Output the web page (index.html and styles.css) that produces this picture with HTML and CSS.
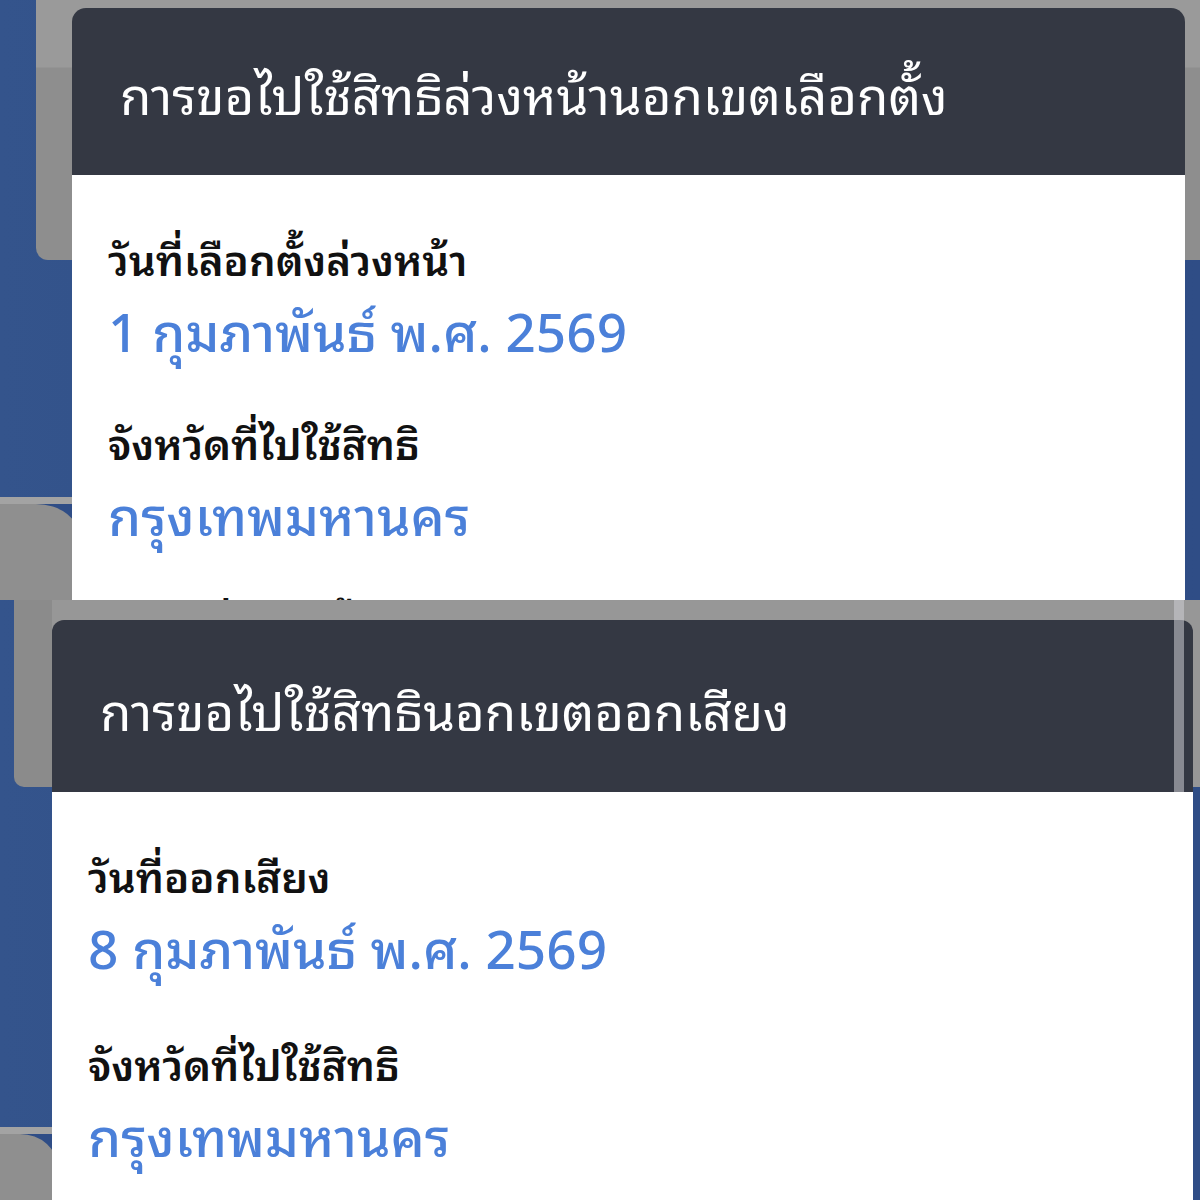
FILE: index.html
```html
<!doctype html>
<html lang="th">
  <head>
    <meta charset="UTF-8" />
    <meta content="width=device-width, initial-scale=1.0" name="viewport" />
    <title>การขอไปใช้สิทธิ</title>
    <link rel="stylesheet" href="styles.css">
  </head>
  <body>
    <div class="shot shot1">
      <div class="back-card"></div>
      <div class="back-corner"></div>
      <div class="sheet">
        <div class="sheet-head">การขอไปใช้สิทธิล่วงหน้านอกเขตเลือกตั้ง</div>
        <div class="sheet-body">
          <div class="label">วันที่เลือกตั้งล่วงหน้า</div>
          <div class="value">1 กุมภาพันธ์ พ.ศ. 2569</div>
          <div class="label">จังหวัดที่ไปใช้สิทธิ</div>
          <div class="value">กรุงเทพมหานคร</div>
          <div class="label">สถานที่เลือกตั้ง</div>
        </div>
      </div>
    </div>
    <div class="shot shot2">
      <div class="back-card"></div>
      <div class="back-corner"></div>
      <div class="sheet">
        <div class="sheet-head">การขอไปใช้สิทธินอกเขตออกเสียง</div>
        <div class="sheet-body">
          <div class="label">วันที่ออกเสียง</div>
          <div class="value">8 กุมภาพันธ์ พ.ศ. 2569</div>
          <div class="label">จังหวัดที่ไปใช้สิทธิ</div>
          <div class="value">กรุงเทพมหานคร</div>
        </div>
      </div>
      <div class="scroll-strip"></div>
    </div>
  </body>
</html>
```

FILE: styles.css
```css
* {
  box-sizing: border-box;
  padding: 0;
  margin: 0;
}

body {
  width: 1200px;
  font-family: "Noto Sans Thai Looped", "Noto Looped Thai", Loma, Garuda, "Noto Sans Thai", "Noto Sans", sans-serif;
  background: #2f4d86;
}

.shot {
  position: relative;
  height: 600px;
  overflow: hidden;
  background: linear-gradient(90deg, #34548c 0%, #2c4a82 60%, #2f4d86 100%);
}

/* grey card sitting behind the sheet */
.back-card {
  position: absolute;
  top: -20px;
  right: 0;
  background: linear-gradient(#9a9a9a 0, #9a9a9a 87px, #8e8e8e 88px);
}

.shot1 .back-card {
  left: 36px;
  height: 280px;
  border-bottom-left-radius: 12px;
}

.shot2 .back-card {
  left: 14px;
  height: 207px;
  border-bottom-left-radius: 10px;
  background: linear-gradient(90deg, #8b8b8b 0, #8b8b8b 38px, #979797 38px);
}

/* rounded grey shape peeking in at the lower left */
.back-corner {
  position: absolute;
  left: 0;
  width: 90px;
  height: 140px;
  border-top: 7px solid #a3a3a3;
  background: #2f4d86;
}

.back-corner::before {
  content: "";
  display: block;
  height: 100%;
  background: #8f8f8f;
}

.shot1 .back-corner {
  top: 497px;
}

.shot1 .back-corner::before {
  width: 80px;
  border-top-right-radius: 44px 34px;
}

.shot2 .back-corner {
  top: 527px;
}

.shot2 .back-corner::before {
  width: 58px;
  border-top-right-radius: 38px 34px;
}

.sheet {
  position: relative;
  display: flex;
  flex-direction: column;
  height: 100%;
}

.shot1 .sheet {
  margin-left: 72px;
  width: 1113px;
  padding-top: 8px;
}

.shot2 .sheet {
  margin-left: 52px;
  width: 1141px;
  padding-top: 20px;
}

.sheet-head {
  flex-shrink: 0;
  display: flex;
  align-items: center;
  background: #343843;
  color: #fff;
  font-size: 51px;
  border-radius: 14px 14px 0 0;
}

.shot1 .sheet-head {
  height: 167px;
  padding: 0 0 0 48px;
}

.shot2 .sheet-head {
  height: 172px;
  padding: 4px 0 0 48px;
  border-radius: 12px 12px 0 0;
}

.sheet-body {
  flex: 1;
  background: #fff;
  padding: 50px 36px 0;
}

.label {
  color: #111;
  font-size: 42px;
  font-weight: 600;
  line-height: 64px;
}

.value {
  color: #4b80d9;
  font-size: 53px;
  font-weight: 500;
  line-height: 80px;
  margin-bottom: 40px;
}

.shot2 .value {
  margin-bottom: 44px;
}

/* pale vertical strip over the right edge of the second sheet */
.scroll-strip {
  position: absolute;
  top: 0;
  left: 1174px;
  width: 10px;
  height: 192px;
  background: rgba(205, 205, 212, 0.55);
}
```
